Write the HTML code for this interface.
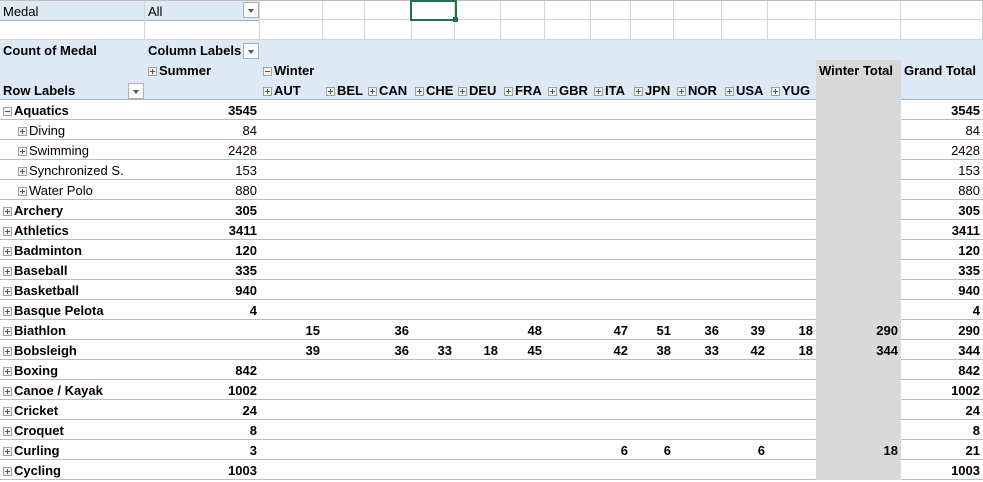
<!DOCTYPE html>
<html><head><meta charset="utf-8"><style>
*{box-sizing:border-box;margin:0;padding:0}
body{width:983px;height:482px;overflow:hidden;background:#fff;font-family:"Liberation Sans",Arial,sans-serif;font-size:13px;color:#000;position:relative}
.r{display:flex;height:20px;border-bottom:1px solid #a9bfdc;position:relative}
.r>div{height:19px;line-height:22px;white-space:nowrap;padding:0 3px;overflow:visible;flex:none}
.r>div:nth-child(1){width:145px}.r>div:nth-child(2){width:115px}.r>div:nth-child(3){width:63px}
.r>div:nth-child(4){width:42px}.r>div:nth-child(5){width:47px}.r>div:nth-child(6){width:43px}
.r>div:nth-child(7){width:46px}.r>div:nth-child(8){width:44px}.r>div:nth-child(9){width:46px}
.r>div:nth-child(10){width:40px}.r>div:nth-child(11){width:43px}.r>div:nth-child(12){width:48px}
.r>div:nth-child(13){width:46px}.r>div:nth-child(14){width:48px}.r>div:nth-child(15){width:85px}
.r>div:nth-child(16){width:82px}
.d>div:nth-child(n+2){text-align:right}
.d>div:nth-child(15),.g>div:nth-child(15){background:#d9d9d9;height:20px;margin-bottom:-1px;position:relative;z-index:1}
.b{font-weight:bold}
.h{background:#dde9f5;border-bottom:none}
.h.last{border-bottom:1px solid #95b3d7}
.w{border-bottom:1px solid #d4d4d4}
.w>div{border-right:1px solid #d4d4d4;height:19px}
.w>div.f{background:#dde9f5}
.w0>div.f{border-bottom:1px solid #95b3d7;height:20px}
.x{display:inline-block;width:9px;height:9px;border:1px solid #a0a0a0;background:#f3f3f3;position:relative;vertical-align:-1px;margin-right:2px}
.x::before{content:"";position:absolute;left:1px;top:3px;width:5px;height:1px;background:#555}
.x.p::after{content:"";position:absolute;left:3px;top:1px;width:1px;height:5px;background:#555}
.dd{position:absolute;width:16px;height:16px;border:1px solid #b0b0b0;background:#fafafa}
.dd::after{content:"";position:absolute;left:4px;top:6px;border-left:3.5px solid transparent;border-right:3.5px solid transparent;border-top:4px solid #555}
.sub>div:first-child{padding-left:18px}
</style></head><body>
<div class="r w w0" style="border-top:1px solid #bdbdbd;height:20px"><div class="f">Medal</div><div class="f">All</div><div></div><div></div><div></div><div></div><div></div><div></div><div></div><div></div><div></div><div></div><div></div><div></div><div></div><div></div></div>
<div class="r w"><div></div><div></div><div></div><div></div><div></div><div></div><div></div><div></div><div></div><div></div><div></div><div></div><div></div><div></div><div></div><div></div></div>
<div style="position:absolute;left:410px;top:0;width:47px;height:21px;border:2px solid #217346"></div>
<div style="position:absolute;left:453px;top:17px;width:5px;height:5px;background:#217346"></div>
<div class="dd" style="left:243px;top:2px"></div>
<div class="r h b"><div>Count of Medal</div><div>Column Labels</div><div></div><div></div><div></div><div></div><div></div><div></div><div></div><div></div><div></div><div></div><div></div><div></div><div></div><div></div></div>
<div class="dd" style="left:243px;top:43px"></div>
<div class="r h b g"><div></div><div><span class="x p"></span>Summer</div><div><span class="x"></span>Winter</div><div></div><div></div><div></div><div></div><div></div><div></div><div></div><div></div><div></div><div></div><div></div><div style="position:relative"><span style="position:absolute;left:3px;top:0">Winter Total</span></div><div>Grand Total</div></div>
<div class="r h last b g"><div>Row Labels</div><div></div><div><span class="x p"></span>AUT</div><div><span class="x p"></span>BEL</div><div><span class="x p"></span>CAN</div><div><span class="x p"></span>CHE</div><div><span class="x p"></span>DEU</div><div><span class="x p"></span>FRA</div><div><span class="x p"></span>GBR</div><div><span class="x p"></span>ITA</div><div><span class="x p"></span>JPN</div><div><span class="x p"></span>NOR</div><div><span class="x p"></span>USA</div><div><span class="x p"></span>YUG</div><div></div><div></div></div>
<div class="dd" style="left:128px;top:83px"></div>

<div class="r d b"><div><span class="x"></span>Aquatics</div><div>3545</div><div></div><div></div><div></div><div></div><div></div><div></div><div></div><div></div><div></div><div></div><div></div><div></div><div></div><div>3545</div></div>
<div class="r d sub"><div><span class="x p"></span>Diving</div><div>84</div><div></div><div></div><div></div><div></div><div></div><div></div><div></div><div></div><div></div><div></div><div></div><div></div><div></div><div>84</div></div>
<div class="r d sub"><div><span class="x p"></span>Swimming</div><div>2428</div><div></div><div></div><div></div><div></div><div></div><div></div><div></div><div></div><div></div><div></div><div></div><div></div><div></div><div>2428</div></div>
<div class="r d sub"><div><span class="x p"></span>Synchronized S.</div><div>153</div><div></div><div></div><div></div><div></div><div></div><div></div><div></div><div></div><div></div><div></div><div></div><div></div><div></div><div>153</div></div>
<div class="r d sub"><div><span class="x p"></span>Water Polo</div><div>880</div><div></div><div></div><div></div><div></div><div></div><div></div><div></div><div></div><div></div><div></div><div></div><div></div><div></div><div>880</div></div>
<div class="r d b"><div><span class="x p"></span>Archery</div><div>305</div><div></div><div></div><div></div><div></div><div></div><div></div><div></div><div></div><div></div><div></div><div></div><div></div><div></div><div>305</div></div>
<div class="r d b"><div><span class="x p"></span>Athletics</div><div>3411</div><div></div><div></div><div></div><div></div><div></div><div></div><div></div><div></div><div></div><div></div><div></div><div></div><div></div><div>3411</div></div>
<div class="r d b"><div><span class="x p"></span>Badminton</div><div>120</div><div></div><div></div><div></div><div></div><div></div><div></div><div></div><div></div><div></div><div></div><div></div><div></div><div></div><div>120</div></div>
<div class="r d b"><div><span class="x p"></span>Baseball</div><div>335</div><div></div><div></div><div></div><div></div><div></div><div></div><div></div><div></div><div></div><div></div><div></div><div></div><div></div><div>335</div></div>
<div class="r d b"><div><span class="x p"></span>Basketball</div><div>940</div><div></div><div></div><div></div><div></div><div></div><div></div><div></div><div></div><div></div><div></div><div></div><div></div><div></div><div>940</div></div>
<div class="r d b"><div><span class="x p"></span>Basque Pelota</div><div>4</div><div></div><div></div><div></div><div></div><div></div><div></div><div></div><div></div><div></div><div></div><div></div><div></div><div></div><div>4</div></div>
<div class="r d b"><div><span class="x p"></span>Biathlon</div><div></div><div>15</div><div></div><div>36</div><div></div><div></div><div>48</div><div></div><div>47</div><div>51</div><div>36</div><div>39</div><div>18</div><div>290</div><div>290</div></div>
<div class="r d b"><div><span class="x p"></span>Bobsleigh</div><div></div><div>39</div><div></div><div>36</div><div>33</div><div>18</div><div>45</div><div></div><div>42</div><div>38</div><div>33</div><div>42</div><div>18</div><div>344</div><div>344</div></div>
<div class="r d b"><div><span class="x p"></span>Boxing</div><div>842</div><div></div><div></div><div></div><div></div><div></div><div></div><div></div><div></div><div></div><div></div><div></div><div></div><div></div><div>842</div></div>
<div class="r d b"><div><span class="x p"></span>Canoe / Kayak</div><div>1002</div><div></div><div></div><div></div><div></div><div></div><div></div><div></div><div></div><div></div><div></div><div></div><div></div><div></div><div>1002</div></div>
<div class="r d b"><div><span class="x p"></span>Cricket</div><div>24</div><div></div><div></div><div></div><div></div><div></div><div></div><div></div><div></div><div></div><div></div><div></div><div></div><div></div><div>24</div></div>
<div class="r d b"><div><span class="x p"></span>Croquet</div><div>8</div><div></div><div></div><div></div><div></div><div></div><div></div><div></div><div></div><div></div><div></div><div></div><div></div><div></div><div>8</div></div>
<div class="r d b"><div><span class="x p"></span>Curling</div><div>3</div><div></div><div></div><div></div><div></div><div></div><div></div><div></div><div>6</div><div>6</div><div></div><div>6</div><div></div><div>18</div><div>21</div></div>
<div class="r d b"><div><span class="x p"></span>Cycling</div><div>1003</div><div></div><div></div><div></div><div></div><div></div><div></div><div></div><div></div><div></div><div></div><div></div><div></div><div></div><div>1003</div></div>
</body></html>
